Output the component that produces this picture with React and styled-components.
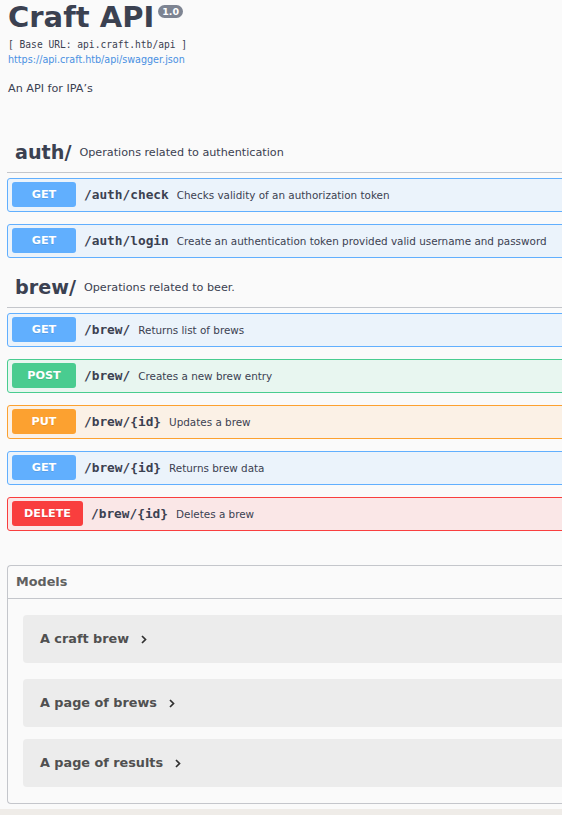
import React from 'react'
import styled, { createGlobalStyle } from 'styled-components'

const GlobalStyle = createGlobalStyle`
  html, body {
    margin: 0;
    padding: 0;
    background: #efece8;
    overflow: hidden;
  }
  body {
    font-family: "DejaVu Sans", "Noto Sans", sans-serif;
    color: #3b4151;
  }
`;

const METHODS = {
  GET: { color: '#61affe', bg: '#ebf3fb' },
  POST: { color: '#49cc90', bg: '#e8f6f0' },
  PUT: { color: '#fca130', bg: '#fbf1e6' },
  DELETE: { color: '#f93e3e', bg: '#fae7e7' },
};

const Page = styled.div`
  width: 600px;
  background: #fafafa;
  padding: 1px 0 5px;
`;

const Info = styled.div`
  padding: 0 8px;
`;

const TitleRow = styled.div`
  display: flex;
  align-items: flex-start;
`;

const Title = styled.h2`
  margin: 0;
  font-size: 29px;
  font-weight: 700;
  line-height: 1.164;
  color: #3b4151;
`;

const Version = styled.span`
  margin: 4px 0 0 4px;
  padding: 1px 4px;
  background: #7d8492;
  color: #fff;
  border-radius: 46px;
  font-size: 9.5px;
  font-weight: 700;
  line-height: 11px;
`;

const BaseUrl = styled.div`
  margin-top: 2px;
  font-family: "DejaVu Sans Mono", monospace;
  font-size: 9.6px;
  line-height: 15px;
  color: #3b4151;
`;

const Link = styled.a`
  display: block;
  font-size: 9.6px;
  line-height: 15px;
  color: #4990e2;
  text-decoration: none;
`;

const Description = styled.p`
  margin: 14px 0 0;
  font-size: 11.2px;
  line-height: 15px;
`;

const Section = styled.div`
  padding: 0 7px;
  margin-top: ${(p) => p.$top}px;
`;

const TagHeader = styled.div`
  display: flex;
  align-items: center;
  height: 39px;
  padding: 0 8px;
  border-bottom: 1px solid #c4c6cb;
  margin-bottom: 5px;
`;

const TagName = styled.span`
  font-size: 19.2px;
  font-weight: 700;
  color: #3b4151;
`;

const TagDesc = styled.small`
  margin-left: 8px;
  font-size: 11.2px;
  color: #3b4151;
`;

const Opblock = styled.div`
  display: flex;
  align-items: center;
  height: 32px;
  padding: 0 4px;
  margin-bottom: 12px;
  border: 1px solid ${(p) => METHODS[p.$method].color};
  background: ${(p) => METHODS[p.$method].bg};
  border-radius: 3px;
`;

const Method = styled.span`
  min-width: 64px;
  box-sizing: border-box;
  padding: 0 12px;
  height: 25px;
  line-height: 25px;
  text-align: center;
  background: ${(p) => METHODS[p.$method].color};
  color: #fff;
  border-radius: 3px;
  font-size: 11.2px;
  font-weight: 700;
  text-shadow: 0 1px 0 rgba(0, 0, 0, 0.1);
`;

const Path = styled.span`
  padding: 0 8px;
  font-family: "DejaVu Sans Mono", monospace;
  font-size: 12.8px;
  font-weight: 700;
  color: #3b4151;
`;

const Summary = styled.span`
  font-size: 10.4px;
  color: #3b4151;
`;

const Models = styled.div`
  margin: 34px 0 0 7px;
  border: 1px solid #c4c6cb;
  border-right: none;
  border-radius: 4px 0 0 4px;
`;

const ModelsHeader = styled.h4`
  margin: 0;
  height: 32px;
  display: flex;
  align-items: center;
  padding: 0 8px;
  border-bottom: 1px solid #c4c6cb;
  font-size: 12.8px;
  font-weight: 700;
  color: #606060;
`;

const ModelList = styled.div`
  padding: 0 0 16px 15px;
`;

const Model = styled.div`
  display: flex;
  align-items: center;
  height: 48px;
  margin-top: ${(p) => p.$top}px;
  padding: 0 17px;
  background: #ececec;
  border-radius: 4px 0 0 4px;
`;

const ModelTitle = styled.span`
  font-size: 12.8px;
  font-weight: 700;
  color: #505050;
`;

const Chevron = () => (
  <svg width="6" height="9" viewBox="0 0 6 9" style={{ marginLeft: 12, marginTop: 2 }}>
    <path d="M1 1 L4.5 4.5 L1 8" fill="none" stroke="#303030" strokeWidth="1.7" />
  </svg>
);

const tags = [
  {
    name: 'auth/',
    desc: 'Operations related to authentication',
    top: 37,
    ops: [
      ['GET', '/auth/check', 'Checks validity of an authorization token'],
      ['GET', '/auth/login', 'Create an authentication token provided valid username and password'],
    ],
  },
  {
    name: 'brew/',
    desc: 'Operations related to beer.',
    top: -2,
    ops: [
      ['GET', '/brew/', 'Returns list of brews'],
      ['POST', '/brew/', 'Creates a new brew entry'],
      ['PUT', '/brew/{id}', 'Updates a brew'],
      ['GET', '/brew/{id}', 'Returns brew data'],
      ['DELETE', '/brew/{id}', 'Deletes a brew'],
    ],
  },
];

const models = [
  ['A craft brew', 16],
  ['A page of brews', 16],
  ['A page of results', 12],
];

const App = () => {
  return (
    <Page>
      <GlobalStyle />
      <Info>
        <TitleRow>
          <Title>Craft API</Title>
          <Version>1.0</Version>
        </TitleRow>
        <BaseUrl>[ Base URL: api.craft.htb/api ]</BaseUrl>
        <Link href="#">https://api.craft.htb/api/swagger.json</Link>
        <Description>An API for IPA’s</Description>
      </Info>
      {tags.map((tag) => (
        <Section key={tag.name} $top={tag.top}>
          <TagHeader>
            <TagName>{tag.name}</TagName>
            <TagDesc>{tag.desc}</TagDesc>
          </TagHeader>
          {tag.ops.map(([method, path, summary], idx) => (
            <Opblock key={idx} $method={method}>
              <Method $method={method}>{method}</Method>
              <Path>{path}</Path>
              <Summary>{summary}</Summary>
            </Opblock>
          ))}
        </Section>
      ))}
      <Models>
        <ModelsHeader>Models</ModelsHeader>
        <ModelList>
          {models.map(([title, top]) => (
            <Model key={title} $top={top}>
              <ModelTitle>{title}</ModelTitle>
              <Chevron />
            </Model>
          ))}
        </ModelList>
      </Models>
    </Page>
  )
}

export default App
